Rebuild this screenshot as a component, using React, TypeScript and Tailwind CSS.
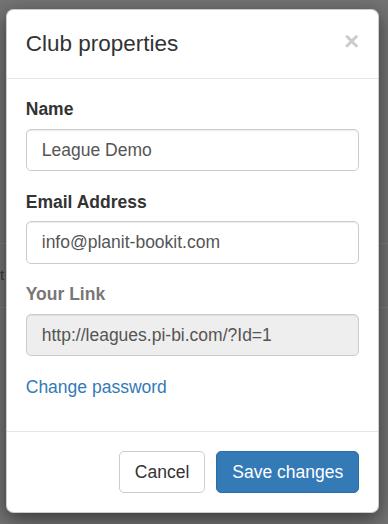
const font = { fontFamily: '"Liberation Sans", Arial, sans-serif' };

function Field({
  label,
  value,
  disabled,
}: {
  label: string;
  value: string;
  disabled?: boolean;
}) {
  return (
    <div className="mb-[18.75px]">
      <label
        className={`mb-[6.25px] inline-block text-[17.5px] leading-[25px] font-bold ${
          disabled ? "text-[#777]" : "text-[#333]"
        }`}
      >
        {label}
      </label>
      <div
        className={`flex h-[42.5px] items-center rounded-[5px] border border-[#ccc] px-[15px] text-[17.5px] text-[#555] shadow-[inset_0_1px_1px_rgba(0,0,0,0.075)] ${
          disabled ? "bg-[#eee]" : "bg-white"
        }`}
      >
        {value}
      </div>
    </div>
  );
}

export default function App() {
  return (
    <div className="relative h-[524px] w-[388px] overflow-hidden bg-[#737373]" style={font}>
      {/* page behind the overlay */}
      <div className="flex flex-col pt-[243px]">
        <div className="h-px bg-[#7c7c7c]" />
        <div className="flex h-[63px] items-center text-[15px] text-[#3a3a3a]">
          <span>t</span>
        </div>
        <div className="h-px bg-[#7c7c7c]" />
      </div>

      {/* modal */}
      <div className="absolute top-[9px] left-[6px] w-[373px] rounded-[7.5px] border border-[rgba(0,0,0,0.2)] bg-white shadow-[0_6px_19px_rgba(0,0,0,0.5)]">
        <div className="flex items-start justify-between border-b border-[#e5e5e5] px-[18.75px] pt-[17.5px] pb-[18.75px]">
          <h4 className="text-[22.5px] leading-[32px] text-[#333]">Club properties</h4>
          <button className="mt-0 text-[26px] leading-none font-bold text-black opacity-20">
            ×
          </button>
        </div>

        <div className="px-[18.75px] pt-[18px] pb-[18.75px]">
          <Field label="Name" value="League Demo" />
          <Field label="Email Address" value="info@planit-bookit.com" />
          <Field label="Your Link" value="http://leagues.pi-bi.com/?Id=1" disabled />
          <p className="mb-[12.5px] text-[17.5px] leading-[25px] text-[#337ab7]">
            Change password
          </p>
        </div>

        <div className="flex justify-end gap-[11px] border-t border-[#e5e5e5] p-[18.75px]">
          <button className="h-[42.5px] rounded-[5px] border border-[#ccc] bg-white px-[15px] text-[17.5px] text-[#333]">
            Cancel
          </button>
          <button className="h-[42.5px] rounded-[5px] border border-[#2e6da4] bg-[#337ab7] px-[15px] text-[17.5px] text-white">
            Save changes
          </button>
        </div>
      </div>
    </div>
  );
}
